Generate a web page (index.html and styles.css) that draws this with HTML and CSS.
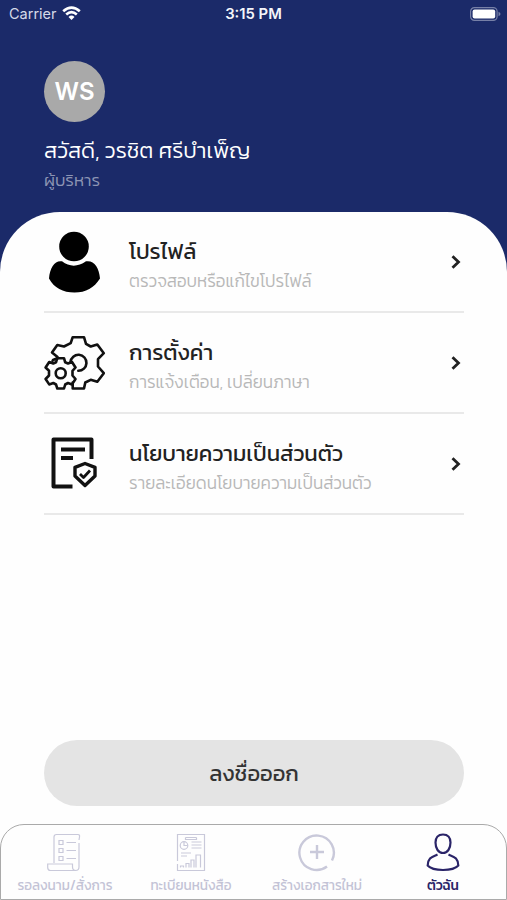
FILE: index.html
```html
<!DOCTYPE html>
<html lang="th">
<head>
    <meta charset="UTF-8">
    <meta name="viewport" content="width=device-width, initial-scale=1.0">
    <title>ตัวฉัน</title>
    <link rel="stylesheet" href="styles.css">
</head>
<body>
    <header>
        <div class="status-bar">
            <div class="carrier">
                <span>Carrier</span>
                <svg width="19" height="15" viewBox="0 0 19 15" fill="none" stroke="#fff" stroke-width="2.7">
                    <path d="M1.2 5.2Q9.5 -2 17.8 5.2"/>
                    <path d="M4.2 8.4Q9.5 3.8 14.8 8.4"/>
                    <path d="M6.5 10.9Q9.5 8.3 12.5 10.9L9.5 14Z" fill="#fff" stroke="none"/>
                </svg>
            </div>
            <div class="time">3:15 PM</div>
            <svg class="battery" width="31" height="14" viewBox="0 0 31 14">
                <rect x=".6" y=".6" width="26.5" height="12.8" rx="3.8" fill="none" stroke="#7780a7" stroke-width="1.2"/>
                <rect x="2.6" y="2.6" width="22.6" height="8.8" rx="2" fill="#fff"/>
                <path d="M28.5 4.8Q30.5 5.6 30.5 7T28.5 9.2Z" fill="#7780a7"/>
            </svg>
        </div>
        <div class="avatar">WS</div>
        <h1>สวัสดี, วรชิต ศรีบำเพ็ญ</h1>
        <p class="role">ผู้บริหาร</p>
    </header>
    <main>
        <ul class="menu">
            <li>
                <svg class="icon" width="62" height="64" viewBox="0 0 62 64">
                    <circle cx="30" cy="16.5" r="14.8"/>
                    <path d="M18 31.3Q29.5 40 42 31.3C50 30 55 37 56 48.5C50 58 42 62.5 30.5 62.5S10 58 5 48.5C6 37 11 30 18 31.3Z"/>
                </svg>
                <div class="text">
                    <h2>โปรไฟล์</h2>
                    <p>ตรวจสอบหรือแก้ไขโปรไฟล์</p>
                </div>
                <svg class="arrow" width="10" height="14" viewBox="0 0 10 14"><path d="M1.5 1.2L7.5 7L1.5 12.8"/></svg>
            </li>
            <li>
                <svg class="icon line" width="62" height="64" viewBox="0 0 62 64">
                    <path d="M8.5 30L9 29L14 27L13.5 26L8 21.5L13.3 14L20 15.5L26.7 12.2L28.7 6.2H40L42 12.8L46.7 15.5L53.3 13.5L59.8 22.2L54 28.2V35.5L59.8 42.2L53.3 50.8L46.7 48.8L41.3 51.5L40 57.5H28.7V51.5"/>
                    <path d="M26.5 31A8 8 0 1 1 34.3 39.8"/>
                    <path d="M13.3 27.2H20L21.2 31.3L24 32.5L28 31L31.5 36.5L28.5 39.8V44.5L31.5 48L28 53.4L24 52L21.2 53.5L20 57.5H13.3L12 53.5L9.3 52L5.2 53.4L1.6 48L5 44.5V39.8L1.6 36.5L5.2 31L9.3 32.5L12 31.3Z"/>
                    <circle cx="16.7" cy="42.2" r="5"/>
                </svg>
                <div class="text">
                    <h2>การตั้งค่า</h2>
                    <p>การแจ้งเตือน, เปลี่ยนภาษา</p>
                </div>
                <svg class="arrow" width="10" height="14" viewBox="0 0 10 14"><path d="M1.5 1.2L7.5 7L1.5 12.8"/></svg>
            </li>
            <li>
                <svg class="icon policy" width="62" height="64" viewBox="0 0 62 64">
                    <path d="M28.5 54.5H9.5V7.5H47.5V27" stroke-width="4"/>
                    <path d="M17 17.5H41M17 26H29" stroke-width="4"/>
                    <path d="M41 31.5L51 35.3V44L41 53.5L31 44V35.3Z" stroke-width="3.4"/>
                    <path d="M36 42L39.5 45.5L46 38.5" stroke-width="2.8"/>
                </svg>
                <div class="text">
                    <h2>นโยบายความเป็นส่วนตัว</h2>
                    <p>รายละเอียดนโยบายความเป็นส่วนตัว</p>
                </div>
                <svg class="arrow" width="10" height="14" viewBox="0 0 10 14"><path d="M1.5 1.2L7.5 7L1.5 12.8"/></svg>
            </li>
        </ul>
        <button class="logout">ลงชื่อออก</button>
    </main>
    <nav>
        <a class="tab">
            <svg width="36" height="40" viewBox="0 0 36 40">
                <path d="M7 30V4Q7 1.5 9.500 1.5H31Q33 1.5 32.5 4L32 7M32 10V34Q32 37.5 28.5 37.5H3.500Q0.700 37.5 0.700 34.5V31H25.5V34Q25.5 37.5 29 37.5"/>
                <path d="M12 7.5H16V11.5H12ZM12 15.5H16V19.5H12ZM12 23.5H16V27.5H12ZM19.5 9.5H29M19.5 17.5H29M19.5 25.5H29"/>
            </svg>
            <span>รอลงนาม/สั่งการ</span>
        </a>
        <a class="tab">
            <svg width="36" height="40" viewBox="0 0 36 40">
                <path d="M4.5 28V1.5H31.5V37.5H4.5V31M12.5 4.5H23.5M12.5 4.5V6.5H23.5V4.5"/>
                <circle cx="11" cy="12.5" r="3.8"/>
                <path d="M11 9V12.5H14.5M18.5 9H28.5M18.5 12H28.5M18.5 15H28.5M8 20H18M8 23H14M7.500 34.5V33H10.500V34.500M13 34.500V30.500H16V34.500M18 34.500V27H21V34.500M23 34.500V22H27.500V34.500"/>
            </svg>
            <span>ทะเบียนหนังสือ</span>
        </a>
        <a class="tab plus">
            <svg width="38" height="40" viewBox="0 0 38 40">
                <path d="M29 33.5A17.2 17.2 0 1 1 34 27.5M19 12V26M12 19H26"/>
            </svg>
            <span>สร้างเอกสารใหม่</span>
        </a>
        <a class="tab active">
            <svg width="36" height="40" viewBox="0 0 36 40">
                <path d="M18 1.5C13 1.5 10.5 4.5 10.5 9.5C10.5 15.5 13.5 20 18 20S25.5 15.5 25.5 9.5C25.5 4.5 23 1.5 18 1.5Z"/>
                <path d="M12.5 21.5C7 24 3 24.5 2.7 32.5C8 38.5 28 38.5 33.3 32.5C33 24.5 29 24 23.5 21.5"/>
            </svg>
            <span>ตัวฉัน</span>
        </a>
    </nav>
</body>
</html>
```

FILE: styles.css
```css
* {
    box-sizing: border-box;
}
body {
    font-family: Kanit, Prompt, "Noto Sans Thai", "Noto Sans", sans-serif;
    margin: 0;
    height: 900px;
    display: flex;
    flex-direction: column;
    background-color: #1b2a69;
    overflow: hidden;
}
h1, h2, p, ul {
    margin: 0;
    padding: 0;
    font-weight: normal;
    white-space: nowrap;
}
header {
    height: 212px;
    color: #fff;
}
.status-bar {
    height: 27px;
    padding: 0 6px 0 9px;
    display: grid;
    grid-template-columns: 1fr auto 1fr;
    align-items: center;
    font-family: Inter, sans-serif;
    font-size: 14.5px;
}
.carrier {
    display: flex;
    align-items: center;
    gap: 5px;
    color: #d5d9e8;
}
.time {
    font-weight: 600;
    font-size: 14.8px;
    color: #f4f5fa;
    margin-right: 3px;
}
.battery {
    justify-self: end;
}
.avatar {
    width: 61px;
    height: 61px;
    margin: 34px 0 0 44px;
    border-radius: 50%;
    background-color: #a9a9a9;
    display: flex;
    align-items: center;
    justify-content: center;
    font-family: Inter, sans-serif;
    font-size: 24px;
    font-weight: 600;
}
h1 {
    margin: 13px 0 0 44px;
    font-size: 22px;
    font-weight: 300;
    line-height: 32px;
}
.role {
    margin-left: 44px;
    font-size: 17px;
    font-weight: 300;
    line-height: 26px;
    color: #8d95b4;
}
main {
    height: 688px;
    flex: none;
    padding: 0 43px 0 44px;
    background-color: #fefefe;
    border-radius: 60px 60px 0 0;
    display: flex;
    flex-direction: column;
}
.menu {
    list-style-type: none;
}
.menu li {
    height: 101px;
    display: flex;
    align-items: center;
    border-bottom: 2px solid #e9e9e9;
}
.icon {
    flex: none;
}
.line {
    fill: none;
    stroke: #111;
    stroke-width: 2.6;
    stroke-linejoin: round;
    stroke-linecap: round;
}
.policy {
    fill: none;
    stroke: #111;
    stroke-linejoin: round;
}
.text {
    flex: 1;
    margin-left: 23px;
    padding-top: 7px;
}
h2 {
    font-size: 22px;
    line-height: 32px;
    color: #222;
}
.text p {
    font-size: 17.1px;
    font-weight: 300;
    line-height: 26px;
    color: #b8b8b8;
}
.arrow {
    margin-right: 3px;
    fill: none;
    stroke: #222;
    stroke-width: 2.8;
}
.logout {
    height: 66px;
    margin-top: 225px;
    border: none;
    border-radius: 33px;
    background-color: #e4e4e4;
    color: #333;
    font-family: inherit;
    font-size: 22px;
}
nav {
    flex: none;
    height: 76px;
    margin-top: -76px;
    padding: 8px 0 0 1px;
    border: 1px solid #aaa;
    border-radius: 24px 24px 0 0;
    background-color: #fefefe;
    display: flex;
}
.tab {
    flex: 1;
    display: flex;
    flex-direction: column;
    align-items: center;
    color: #c3c3d6;
    font-size: 13.5px;
    line-height: 25px;
    white-space: nowrap;
}
.tab svg {
    flex: none;
    fill: none;
    stroke: #c9c9da;
    stroke-width: 1.2;
}
.plus svg {
    stroke-width: 2.4;
}
.active {
    color: #2a2468;
    font-weight: 500;
}
.active svg {
    stroke: #2a2468;
    stroke-width: 2.2;
}
```
